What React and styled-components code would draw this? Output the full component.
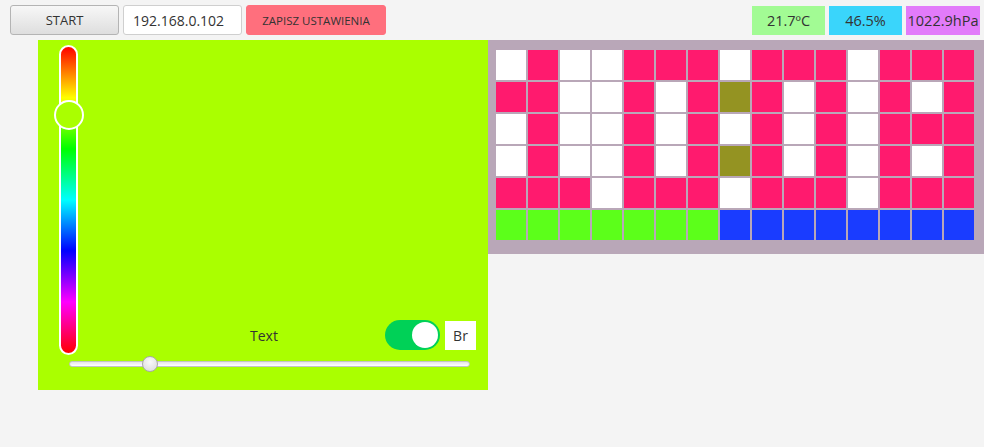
import React from 'react';
import styled, { createGlobalStyle } from 'styled-components';

const GlobalStyle = createGlobalStyle`
  html, body {
    margin: 0;
    height: 100%;
  }

  body {
    font-family: "Open Sans", "Noto Sans", "Liberation Sans", sans-serif;
    background: #f4f4f4;
    color: #333;
  }
`;

const Window = styled.div`
  width: 984px;
  height: 447px;
  overflow: hidden;
`;

const Toolbar = styled.div`
  display: flex;
  align-items: center;
  gap: 4px;
  height: 30px;
  padding: 5px 4px 5px 10px;
`;

const Button = styled.button`
  height: 30px;
  width: ${p => p.$width}px;
  margin: 0;
  padding: 0;
  border-radius: 3px;
  font-family: inherit;
  color: #333;
  cursor: pointer;
  ${p => p.$danger ? `
    background: #ff6f7d;
    border: 1px solid #ff6f7d;
    font-size: 11.5px;
  ` : `
    background: linear-gradient(to bottom, #f7f7f7, #dedede);
    border: 1px solid #b4b4b4;
    font-size: 13px;
  `}
`;

const AddressInput = styled.input`
  box-sizing: border-box;
  height: 30px;
  width: 119px;
  margin: 0;
  padding: 0 9px;
  border: 1px solid #cfcfcf;
  border-radius: 3px;
  background: #fff;
  font-family: inherit;
  font-size: 14px;
  color: #333;
  outline: none;
`;

const Spacer = styled.div`
  flex: 1;
`;

const Readings = styled.div`
  display: flex;
  gap: 4px;
`;

const Reading = styled.div`
  display: flex;
  align-items: center;
  justify-content: center;
  width: ${p => p.$width}px;
  height: 29px;
  font-size: 14.5px;
  color: #333;
  background: ${p => p.$color};
`;

const Workspace = styled.div`
  display: flex;
  align-items: flex-start;
  padding-left: 38px;
`;

const ColorPanel = styled.div`
  box-sizing: border-box;
  width: 450px;
  height: 350px;
  padding: 5px 12px 0 21px;
  background: #aaff00;
  display: grid;
  grid-template-columns: 19px 1fr;
  grid-template-rows: 310px auto;
`;

const HueTrack = styled.div`
  position: relative;
  box-sizing: border-box;
  width: 19px;
  height: 310px;
  border: 2px solid #fff;
  border-radius: 10px;
  background: linear-gradient(
    to bottom,
    #ff0000 0%,
    #ffff00 16.6%,
    #00ff00 33.3%,
    #00ffff 50%,
    #0000ff 66.6%,
    #ff00ff 83.3%,
    #ff0000 100%
  );
`;

const HueThumb = styled.div`
  position: absolute;
  left: 50%;
  top: ${p => p.$pos}px;
  width: 30px;
  height: 30px;
  box-sizing: border-box;
  margin: -15px 0 0 -15px;
  border: 2px solid #fff;
  border-radius: 50%;
  background: #aaff00;
`;

const Controls = styled.div`
  align-self: end;
  display: flex;
  align-items: center;
  gap: 5px;
  margin-bottom: 5px;
`;

const Caption = styled.span`
  flex: 1;
  padding-left: 70px;
  text-align: center;
  font-size: 14px;
  color: #333;
`;

const Switch = styled.div`
  display: flex;
  align-items: center;
  justify-content: ${p => p.$on ? 'flex-end' : 'flex-start'};
  box-sizing: border-box;
  width: 55px;
  height: 30px;
  padding: 2px;
  border-radius: 15px;
  background: ${p => p.$on ? '#00d157' : '#c8c8c8'};
`;

const SwitchKnob = styled.div`
  width: 26px;
  height: 26px;
  border-radius: 50%;
  background: #fff;
`;

const Tag = styled.div`
  display: flex;
  align-items: center;
  justify-content: center;
  width: 31px;
  height: 29px;
  background: #fff;
  font-size: 14px;
  color: #333;
`;

const RangeRow = styled.div`
  grid-column: 1 / -1;
  position: relative;
  display: flex;
  align-items: center;
  height: 16px;
  margin: 1px 6px 0 10px;
`;

const RangeTrack = styled.div`
  flex: 1;
  box-sizing: border-box;
  height: 6px;
  border: 1px solid #c4c4c4;
  border-radius: 3px;
  background: linear-gradient(to bottom, #e6e6e6, #ffffff);
`;

const RangeThumb = styled.div`
  position: absolute;
  top: 0;
  left: ${p => p.$pos}px;
  width: 16px;
  height: 16px;
  box-sizing: border-box;
  margin-left: -8px;
  border: 1px solid #a8a8a8;
  border-radius: 50%;
  background: radial-gradient(circle at 50% 35%, #fafafa, #d8d8d8);
`;

const MatrixPanel = styled.div`
  flex: 1;
  padding: 10px 10px 14px 8px;
  background: #b9a7b8;
  display: grid;
  grid-template-columns: repeat(15, 30px);
  grid-auto-rows: 30px;
  gap: 2px;
`;

const Led = styled.div`
  background: ${p => p.$color};
`;

const palette = {
  W: '#ffffff',
  P: '#ff1a6e',
  O: '#949322',
  G: '#5cff1a',
  B: '#1a3cff',
};

const matrix = [
  'WPWWPPPWPPPWPPP',
  'PPWWPWPOPWPWPWP',
  'WPWWPWPWPWPWPPP',
  'WPWWPWPOPWPWPWP',
  'PPPWPPPWPPPWPPP',
  'GGGGGGGBBBBBBBB',
];

const App = () => {
  return (
    <>
      <GlobalStyle />
      <Window>
        <Toolbar>
          <Button $width={109}>START</Button>
          <AddressInput defaultValue="192.168.0.102" />
          <Button $width={140} $danger>ZAPISZ USTAWIENIA</Button>
          <Spacer />
          <Readings>
            <Reading $width={73} $color="#a2fb94">21.7ºC</Reading>
            <Reading $width={73} $color="#3ad5fb">46.5%</Reading>
            <Reading $width={74} $color="#e27bfa">1022.9hPa</Reading>
          </Readings>
        </Toolbar>
        <Workspace>
          <ColorPanel>
            <HueTrack>
              <HueThumb $pos={68} />
            </HueTrack>
            <Controls>
              <Caption>Text</Caption>
              <Switch $on>
                <SwitchKnob />
              </Switch>
              <Tag>Br</Tag>
            </Controls>
            <RangeRow>
              <RangeTrack />
              <RangeThumb $pos={81} />
            </RangeRow>
          </ColorPanel>
          <MatrixPanel>
            {matrix.map((row, r) =>
              row.split('').map((c, i) => <Led key={r + '-' + i} $color={palette[c]} />)
            )}
          </MatrixPanel>
        </Workspace>
      </Window>
    </>
  );
};

export default App;
